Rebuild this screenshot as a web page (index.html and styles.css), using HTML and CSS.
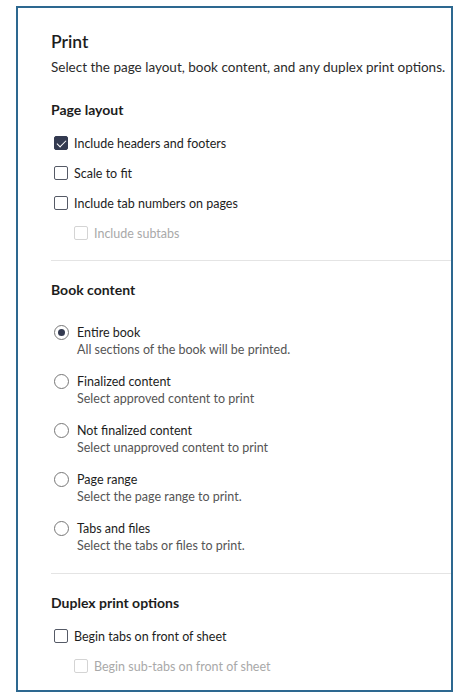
FILE: index.html
```html
<!DOCTYPE html>
<html lang="en">
<head>
  <meta charset="UTF-8" />
  <title>Print</title>
  <link rel="stylesheet" href="styles.css">
</head>
<body>
  <div class="dialog">
    <h1>Print</h1>
    <p class="intro">Select the page layout, book content, and any duplex print options.</p>

    <section class="group">
      <h2>Page layout</h2>
      <div class="check checked"><span class="box"></span>Include headers and footers</div>
      <div class="check"><span class="box"></span>Scale to fit</div>
      <div class="check"><span class="box"></span>Include tab numbers on pages</div>
      <div class="check sub disabled"><span class="box"></span>Include subtabs</div>
    </section>

    <section class="group">
      <h2>Book content</h2>
      <div class="radio-list">
        <div class="radio selected">
          <span class="dot"></span>
          <div><div class="opt">Entire book</div><div class="desc">All sections of the book will be printed.</div></div>
        </div>
        <div class="radio">
          <span class="dot"></span>
          <div><div class="opt">Finalized content</div><div class="desc">Select approved content to print</div></div>
        </div>
        <div class="radio">
          <span class="dot"></span>
          <div><div class="opt">Not finalized content</div><div class="desc">Select unapproved content to print</div></div>
        </div>
        <div class="radio">
          <span class="dot"></span>
          <div><div class="opt">Page range</div><div class="desc">Select the page range to print.</div></div>
        </div>
        <div class="radio">
          <span class="dot"></span>
          <div><div class="opt">Tabs and files</div><div class="desc">Select the tabs or files to print.</div></div>
        </div>
      </div>
    </section>

    <section class="group">
      <h2>Duplex print options</h2>
      <div class="check"><span class="box"></span>Begin tabs on front of sheet</div>
      <div class="check sub disabled"><span class="box"></span>Begin sub-tabs on front of sheet</div>
    </section>
  </div>
</body>
</html>
```

FILE: styles.css
```css
* {
  box-sizing: border-box;
}
body {
  margin: 0;
  background: white;
  font-family: Lato, "Noto Sans", sans-serif;
  color: #222;
}
.dialog {
  margin: 6px 12px 0 16px;
  height: 686px;
  border: 2px solid #2d6890;
  padding: 24px 0 0 33px;
  overflow: hidden;
}
h1 {
  margin: 0;
  font-size: 17.5px;
  font-weight: 600;
  line-height: 20px;
  color: #1d1d1d;
}
.intro {
  margin: 7px 0 0;
  font-size: 13.5px;
  line-height: 16px;
  color: #2b2b2b;
}
.group h2 {
  margin: 0 0 9px;
  font-size: 14px;
  font-weight: 700;
  line-height: 18px;
  color: #1d1d1d;
}
.group:first-of-type {
  padding-top: 26px;
}
.group + .group {
  border-top: 1px solid #e4e4e4;
  margin-top: 12px;
  padding-top: 20px;
}
.check {
  display: flex;
  align-items: center;
  gap: 6px;
  height: 30px;
  font-size: 12.5px;
  color: #1d1d1d;
  margin-left: 3px;
}
.box {
  width: 14px;
  height: 14px;
  border: 1.5px solid #555a66;
  border-radius: 2px;
  position: relative;
}
.checked .box {
  background: #333a50;
  border-color: #333a50;
}
.checked .box::after {
  content: "";
  position: absolute;
  left: 3.5px;
  top: 0.5px;
  width: 4px;
  height: 8px;
  border: solid white;
  border-width: 0 1.5px 1.5px 0;
  transform: rotate(45deg);
}
.sub {
  margin-left: 23px;
}
.disabled {
  color: #a9a9a9;
}
.disabled .box {
  border: 1px solid #d4d4d4;
}
.radio-list {
  padding-top: 16px;
}
.radio {
  display: flex;
  align-items: flex-start;
  gap: 8px;
  margin: 0 0 15px 3px;
}
.radio:last-child {
  margin-bottom: 19px;
}
.dot {
  width: 15px;
  height: 15px;
  margin-top: 1px;
  border: 1.5px solid #777;
  border-radius: 50%;
  flex-shrink: 0;
  display: flex;
  align-items: center;
  justify-content: center;
}
.selected .dot::after {
  content: "";
  width: 7px;
  height: 7px;
  border-radius: 50%;
  background: #333a50;
}
.opt {
  font-size: 12.5px;
  line-height: 17px;
  color: #1d1d1d;
}
.desc {
  font-size: 12.5px;
  line-height: 17px;
  color: #555;
}
```
